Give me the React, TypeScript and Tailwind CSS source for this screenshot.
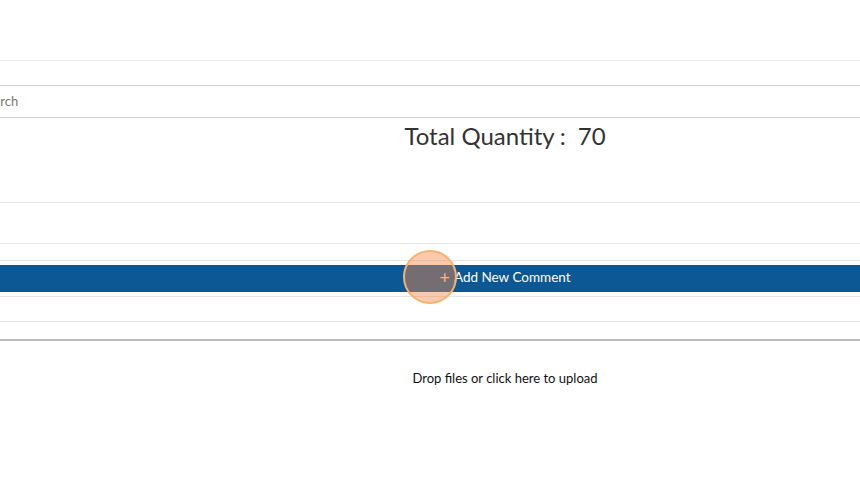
import React from 'react'

const font = { fontFamily: 'Lato, "Noto Sans CJK JP", sans-serif' }

function App() {
  return (
    <div className="w-[860px] h-[481px] overflow-hidden bg-white" style={font}>
      <div className="h-[61px] border-b border-[#ebebeb]" />
      <div className="h-[25px] border-b border-[#cfcfcf]" />
      <div className="h-[32px] border-b border-[#cfcfcf] flex items-center">
        <span className="ml-[-20px] text-[13px] text-[#777]">Search</span>
      </div>
      <div className="h-[85px] border-b border-[#e6e6e6] pl-[150px] flex justify-center pt-[2px]">
        <span className="text-[24px] leading-[32px] text-[#333]">
          Total Quantity<span className="ml-[5px] mr-[12px]">:</span>70
        </span>
      </div>
      <div className="h-[41px] border-b border-[#e6e6e6]" />
      <div className="h-[17px] border-b border-[#e6e6e6]" />
      <div className="h-[36px] border-b border-[#e6e6e6] pt-[4px]">
        <div className="relative h-[27px] bg-[#0c5894] flex items-center justify-center pl-[150px]">
          <span className="text-[13.5px] leading-[16px] text-white mt-[-3px] flex items-center">
            <span className="text-[18px] mr-[4px] text-[#fbd3b3]">+</span>Add New Comment
          </span>
          <div className="absolute left-[403px] top-[-15px] w-[54px] h-[54px] rounded-full bg-[#f58a4a]/45 border-2 border-[#f6b173]" />
        </div>
      </div>
      <div className="h-[25px] border-b border-[#e6e6e6]" />
      <div className="h-[19px] border-b-2 border-[#bdbdbd]" />
      <div className="pl-[150px] pt-[28px] flex justify-center">
        <span className="text-[13px] text-[#111]">Drop files or click here to upload</span>
      </div>
    </div>
  )
}

export default App
